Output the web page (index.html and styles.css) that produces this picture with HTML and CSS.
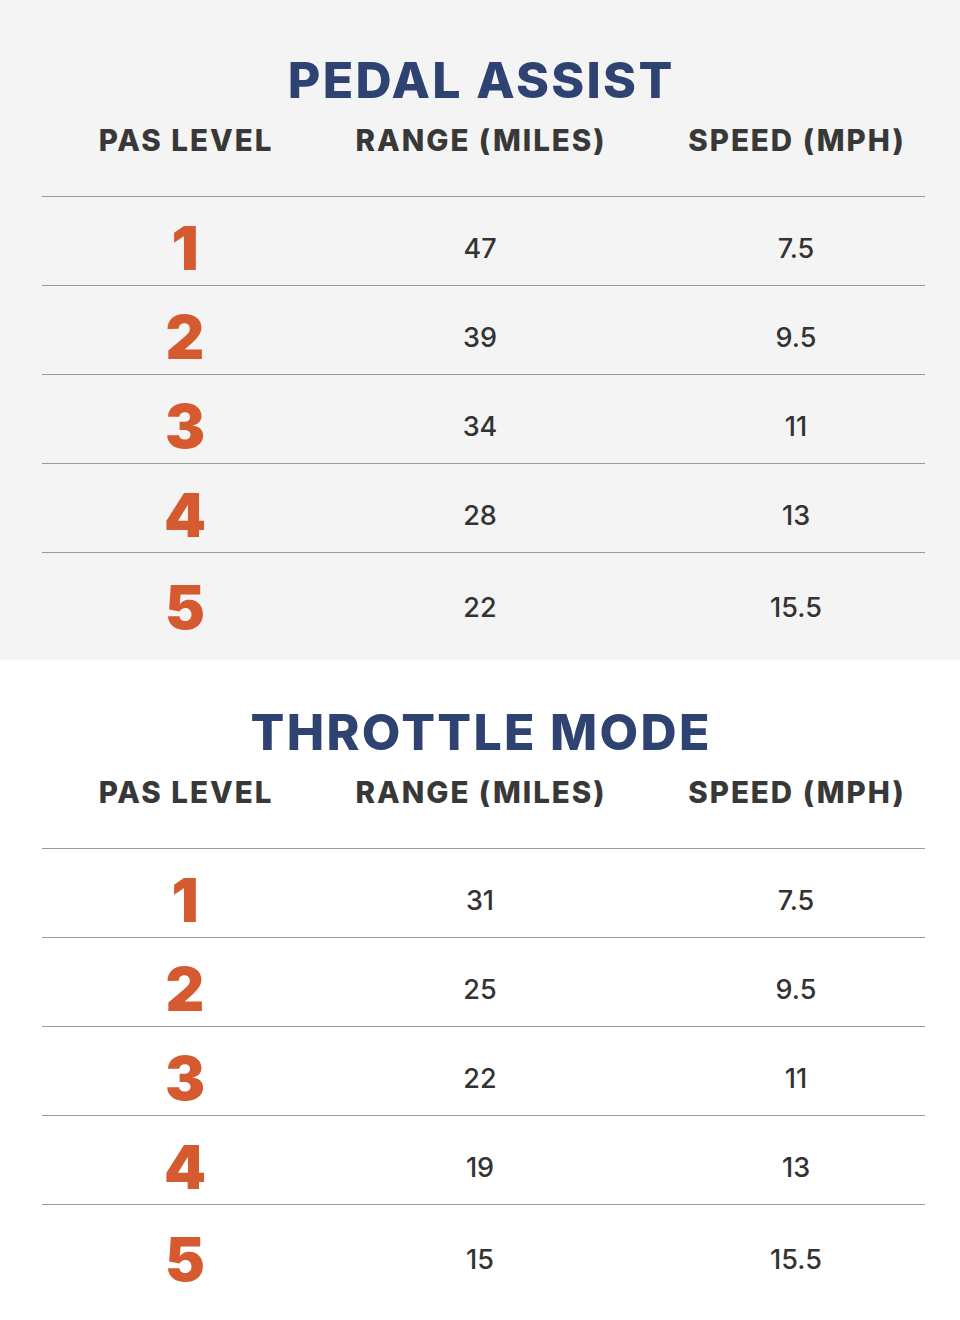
FILE: index.html
```html
<!DOCTYPE html>
<html lang="en">
<head>
<meta charset="utf-8">
<title>PAS Range Chart</title>
<link rel="stylesheet" href="styles.css">
</head>
<body>
<section class="panel panel-grey">
  <h2 class="title">PEDAL ASSIST</h2>
  <div class="table">
    <div class="row head"><div class="c1">PAS LEVEL</div><div class="c2">RANGE (MILES)</div><div class="c3">SPEED (MPH)</div></div>
    <div class="row"><div class="c1 lvl">1</div><div class="c2">47</div><div class="c3">7.5</div></div>
    <div class="row"><div class="c1 lvl">2</div><div class="c2">39</div><div class="c3">9.5</div></div>
    <div class="row"><div class="c1 lvl">3</div><div class="c2">34</div><div class="c3">11</div></div>
    <div class="row"><div class="c1 lvl">4</div><div class="c2">28</div><div class="c3">13</div></div>
    <div class="row last"><div class="c1 lvl">5</div><div class="c2">22</div><div class="c3">15.5</div></div>
  </div>
</section>
<section class="panel panel-white">
  <h2 class="title">THROTTLE MODE</h2>
  <div class="table">
    <div class="row head"><div class="c1">PAS LEVEL</div><div class="c2">RANGE (MILES)</div><div class="c3">SPEED (MPH)</div></div>
    <div class="row"><div class="c1 lvl">1</div><div class="c2">31</div><div class="c3">7.5</div></div>
    <div class="row"><div class="c1 lvl">2</div><div class="c2">25</div><div class="c3">9.5</div></div>
    <div class="row"><div class="c1 lvl">3</div><div class="c2">22</div><div class="c3">11</div></div>
    <div class="row"><div class="c1 lvl">4</div><div class="c2">19</div><div class="c3">13</div></div>
    <div class="row last"><div class="c1 lvl">5</div><div class="c2">15</div><div class="c3">15.5</div></div>
  </div>
</section>
</body>
</html>
```
FILE: styles.css
```css
* { box-sizing: border-box; }
html, body { margin: 0; padding: 0; }
body {
  width: 960px;
  height: 1320px;
  background: #ffffff;
  font-family: Inter, "Liberation Sans", sans-serif;
  color: #333333;
  overflow: hidden;
}
.panel { width: 960px; }
.panel-grey { background: #f4f4f4; padding: 50px 0 0; height: 660px; }
.panel-white { background: #ffffff; padding: 42px 0 0; }
.title {
  margin: 0;
  height: 60px;
  line-height: 60px;
  text-align: center;
  font-size: 50px;
  font-weight: 800;
  color: #2e4371;
  letter-spacing: 2.3px;
  text-indent: 2.3px;
}
.table { margin: 10px 0 0 42px; width: 883px; }
.row {
  display: grid;
  grid-template-columns: 286px 304px 293px;
  align-items: center;
  height: 89px;
  padding-top: 14px;
  border-bottom: 1px solid #9a9a9a;
  font-size: 27px;
  font-weight: 500;
  color: #333333;
}
.row > div { text-align: center; }
.row .c3 { padding-left: 35px; }
.row.head {
  height: 77px;
  padding-top: 0;
  padding-bottom: 36px;
  font-size: 29.5px;
  font-weight: 800;
  color: #383838;
  letter-spacing: 2px;
}
.row.head > div { text-indent: 2px; }
.row.last { border-bottom: none; padding-top: 16px; height: 92px; }
.lvl {
  font-size: 60px;
  font-weight: 900;
  color: #d55a30;
  line-height: 60px;
}
```
